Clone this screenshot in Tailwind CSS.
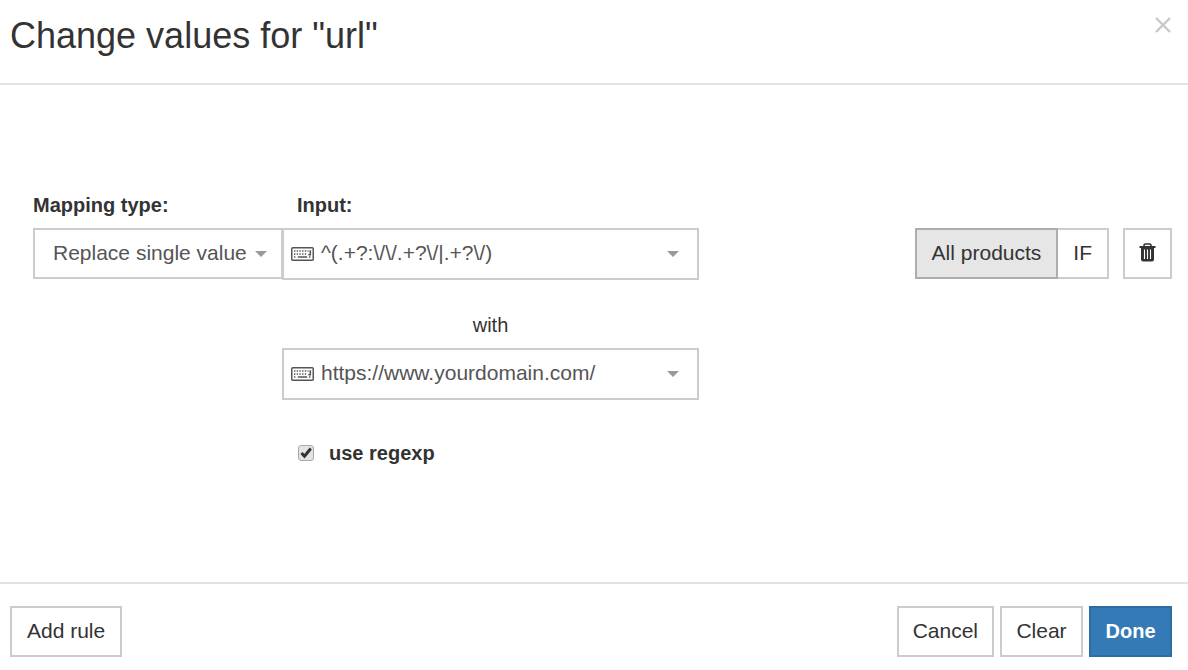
<!DOCTYPE html>
<html lang="en">

<head>
    <meta charset="UTF-8">
    <meta name="viewport" content="width=device-width, initial-scale=1.0">
    <title>Change values</title>
    <script src="https://cdn.jsdelivr.net/npm/@tailwindcss/browser@4"></script>
</head>

<body class="bg-white text-[#333] font-['Liberation_Sans',Arial,sans-serif] text-[21px] leading-[25px]">
    <form class="min-h-screen flex flex-col">
        <header class="flex items-start justify-between pl-[10px] pr-4 pt-4 pb-[27px] border-b-2 border-[#e2e2e2]">
            <h1 class="text-4xl">Change values for "url"</h1>
            <button type="button" aria-label="Close" class="text-[#c8c8c8] p-px">
                <svg class="w-4 h-4" viewBox="0 0 16 16" fill="none" stroke="currentColor" stroke-width="2.4">
                    <path d="M1 1l14 14M15 1L1 15"></path>
                </svg>
            </button>
        </header>

        <main class="grow grid grid-cols-[249fr_417fr_473fr] content-start pl-[33px] pr-4 pt-[106px]">
            <label for="mapping-type" class="text-xl font-bold pb-[9px]">Mapping type:</label>
            <label for="input-value" class="text-xl font-bold pb-[9px] pl-[15px]">Input:</label>
            <div></div>

            <div class="grid items-center self-start">
                <select id="mapping-type"
                    class="col-start-1 row-start-1 appearance-none w-full h-[51px] pl-[18px] pr-8 pb-[2px] border-2 border-r border-[#ccc] bg-white text-[#555]">
                    <option>Replace single value</option>
                </select>
                <svg class="col-start-1 row-start-1 justify-self-end mr-[15px] w-3 h-[6px] text-[#999] pointer-events-none"
                    viewBox="0 0 12 6" fill="currentColor">
                    <path d="M0 0h12L6 6z"></path>
                </svg>
            </div>

            <div>
                <div class="grid items-center">
                    <select id="input-value"
                        class="col-start-1 row-start-1 appearance-none w-full h-[52px] pl-[37px] pr-12 pb-[3px] border-2 border-[#ccc] bg-white text-[#555]">
                        <option>^(.+?:\/\/.+?\/|.+?\/)</option>
                    </select>
                    <svg class="col-start-1 row-start-1 ml-[9px] w-[23px] h-[14px] text-[#555] pointer-events-none"
                        viewBox="0 0 23 14" fill="none" stroke="currentColor">
                        <rect x="0.75" y="0.75" width="21.5" height="12.5" rx="1" stroke-width="1.5"></rect>
                        <path stroke-width="1.4" stroke-dasharray="1.4 1.3" d="M3 4h14.5M3 7h13M3 10h2.6M18 10h2"></path>
                        <path stroke-width="1.6" d="M6.8 10h9.4M19.3 3.2v4.6h-2"></path>
                    </svg>
                    <svg class="col-start-1 row-start-1 justify-self-end mr-5 w-3 h-[6px] text-[#999] pointer-events-none"
                        viewBox="0 0 12 6" fill="currentColor">
                        <path d="M0 0h12L6 6z"></path>
                    </svg>
                </div>

                <label for="replace-value" class="block text-xl text-center pt-[31px] pb-[9px]">with</label>

                <div class="grid items-center">
                    <select id="replace-value"
                        class="col-start-1 row-start-1 appearance-none w-full h-[52px] pl-[37px] pr-12 pb-[3px] border-2 border-[#ccc] bg-white text-[#555]">
                        <option>https://www.yourdomain.com/</option>
                    </select>
                    <svg class="col-start-1 row-start-1 ml-[9px] w-[23px] h-[14px] text-[#555] pointer-events-none"
                        viewBox="0 0 23 14" fill="none" stroke="currentColor">
                        <rect x="0.75" y="0.75" width="21.5" height="12.5" rx="1" stroke-width="1.5"></rect>
                        <path stroke-width="1.4" stroke-dasharray="1.4 1.3" d="M3 4h14.5M3 7h13M3 10h2.6M18 10h2"></path>
                        <path stroke-width="1.6" d="M6.8 10h9.4M19.3 3.2v4.6h-2"></path>
                    </svg>
                    <svg class="col-start-1 row-start-1 justify-self-end mr-5 w-3 h-[6px] text-[#999] pointer-events-none"
                        viewBox="0 0 12 6" fill="currentColor">
                        <path d="M0 0h12L6 6z"></path>
                    </svg>
                </div>

                <div class="flex items-center gap-[15px] pt-[39px] pl-4">
                    <div class="grid place-items-center">
                        <input type="checkbox" id="use-regexp" checked
                            class="peer col-start-1 row-start-1 appearance-none w-4 h-4 rounded-[3px] border border-[#aaa] bg-[#e4e4e4]">
                        <svg class="col-start-1 row-start-1 w-4 h-4 text-[#333] pointer-events-none invisible peer-checked:visible"
                            viewBox="0 0 16 16" fill="none" stroke="currentColor" stroke-width="3">
                            <path d="M3.5 8l3 3.2L12.8 3.5"></path>
                        </svg>
                    </div>
                    <label for="use-regexp" class="text-xl font-bold">use regexp</label>
                </div>
            </div>

            <div class="flex justify-end items-start">
                <button type="button" class="h-[51px] px-[15px] pb-[2px] border-2 border-[#adadad] bg-[#e6e6e6]">All products</button>
                <button type="button" class="h-[51px] px-[15px] pb-[2px] border-2 border-l-0 border-[#ccc] bg-white">IF</button>
                <button type="button" aria-label="Delete rule"
                    class="h-[51px] ml-[14px] px-[14px] pb-[2px] border-2 border-[#ccc] bg-white">
                    <svg class="w-[17px] h-[19px]" viewBox="0 0 17 19" fill="none" stroke="currentColor">
                        <path stroke-width="1.6" d="M5 3.5V2.4a1.4 1.4 0 0 1 1.4-1.4h4.2a1.4 1.4 0 0 1 1.4 1.4v1.1"></path>
                        <path stroke-width="2" d="M0.5 4h16"></path>
                        <path fill="currentColor" stroke="none" d="M2 5h13v11.5a2 2 0 0 1-2 2H4a2 2 0 0 1-2-2z"></path>
                        <path stroke="#fff" stroke-width="1.1" d="M5.5 6.5v9.5M8.5 6.5v9.5M11.5 6.5v9.5"></path>
                    </svg>
                </button>
            </div>
        </main>

        <footer class="flex justify-between pl-[10px] pr-4 pt-[22px] pb-[13px] border-t-2 border-[#e2e2e2]">
            <button type="button" class="h-[51px] px-[15px] pb-[2px] border-2 border-[#ccc] bg-white">Add rule</button>
            <div class="flex gap-[6px]">
                <button type="button" class="h-[51px] px-[14px] pb-[2px] border-2 border-[#ccc] bg-white">Cancel</button>
                <button type="button" class="h-[51px] min-w-[83px] px-[14px] pb-[2px] border-2 border-[#ccc] bg-white">Clear</button>
                <button type="submit" class="h-[51px] min-w-[83px] px-[14px] pb-[2px] border-2 border-[#2e6da4] bg-[#337ab7] text-xl font-bold text-white">Done</button>
            </div>
        </footer>
    </form>
</body>

</html>
